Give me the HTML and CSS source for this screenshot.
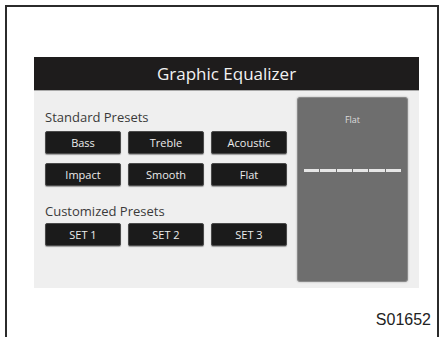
FILE: index.html
```html
<!DOCTYPE html>
<html lang="en">
<head>
  <meta charset="UTF-8">
  <title>Graphic Equalizer</title>
  <link rel="stylesheet" href="styles.css">
</head>
<body>
  <div class="frame">
    <div class="screen">
      <div class="title-bar">Graphic Equalizer</div>
      <div class="panel">
        <div class="presets">
          <div class="label">Standard Presets</div>
          <div class="btn-grid">
            <div class="btn">Bass</div>
            <div class="btn">Treble</div>
            <div class="btn">Acoustic</div>
            <div class="btn">Impact</div>
            <div class="btn">Smooth</div>
            <div class="btn">Flat</div>
          </div>
          <div class="label label-custom">Customized Presets</div>
          <div class="btn-grid">
            <div class="btn">SET 1</div>
            <div class="btn">SET 2</div>
            <div class="btn">SET 3</div>
          </div>
        </div>
        <div class="eq-box">
          <div class="eq-name">Flat</div>
          <div class="eq-line">
            <span></span><span></span><span></span><span></span><span></span><span></span>
          </div>
        </div>
      </div>
    </div>
    <div class="code">S01652</div>
  </div>
</body>
</html>
```

FILE: styles.css
```css
/* Page frame */
body {
  margin: 0;
  background: #fff;
  font-family: "Open Sans", "Noto Sans", sans-serif;
}
.frame {
  margin: 5px 2px 0 5px;
  height: 340px;
  border: 2px solid #2b2b2b;
  border-bottom: none;
  box-sizing: border-box;
  padding: 50px 0 0 27px;
}
/* Head unit screen */
.screen {
  width: 385px;
}
.title-bar {
  height: 33px;
  background: #1e1c1c;
  color: #f2f2f2;
  font-size: 17px;
  line-height: 33px;
  text-align: center;
  border-bottom: 1px solid #a9a9a9;
}
.panel {
  height: 197px;
  background: #efefef;
  display: flex;
  justify-content: space-between;
  padding: 6px 11px 6px 11px;
  box-sizing: border-box;
}
.presets {
  padding-top: 12px;
}
.label {
  font-size: 13px;
  line-height: 16px;
  color: #3a3a3a;
  margin-bottom: 6px;
}
.label-custom {
  margin-top: 17px;
  margin-bottom: 4px;
}
.btn-grid {
  display: grid;
  grid-template-columns: repeat(3, 76px);
  column-gap: 7px;
  row-gap: 9px;
}
.btn {
  height: 23px;
  background: #1b1b1b;
  border: 1px solid #4a4a4a;
  border-radius: 2px;
  box-sizing: border-box;
  color: #ececec;
  font-size: 11px;
  line-height: 21px;
  text-align: center;
  box-shadow: 0 1px 1px rgba(0, 0, 0, 0.35);
}
/* Equalizer preview box */
.eq-box {
  width: 111px;
  background: #6e6e6e;
  border: 1px solid #8a8a8a;
  border-radius: 3px;
  box-sizing: border-box;
  padding: 15px 6px 0;
  box-shadow: 0 0 2px rgba(0, 0, 0, 0.3);
}
.eq-name {
  color: #dcdcdc;
  font-size: 9px;
  text-align: center;
  line-height: 14px;
}
.eq-line {
  display: flex;
  gap: 1px;
  margin-top: 42px;
}
.eq-line span {
  flex: 1;
  height: 3px;
  background: #e6e6e6;
}
.code {
  text-align: right;
  font-family: "Liberation Sans", Arial, sans-serif;
  font-size: 16px;
  color: #222;
  margin: 23px 6px 0 0;
}
```
